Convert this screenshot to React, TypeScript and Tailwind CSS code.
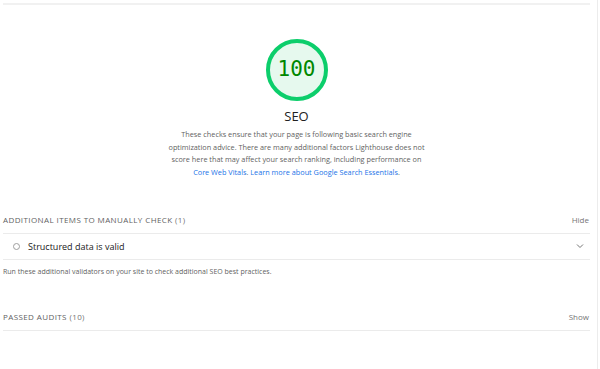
import React from "react";

function Gauge() {
  return (
    <div className="relative h-[64px] w-[64px]">
      <svg width="64" height="64" viewBox="0 0 64 64" className="absolute inset-0">
        <circle cx="32" cy="32" r="29" fill="#e6f9ee" stroke="#0cce6b" strokeWidth="4" />
      </svg>
      <div className="absolute inset-0 flex items-center justify-center text-[21px] text-[#008800] [font-family:'DejaVu_Sans_Mono',monospace]">
        100
      </div>
    </div>
  );
}

function GroupHeader({ title, count, action }: { title: string; count: number; action: string }) {
  return (
    <div className="flex h-[26px] items-center justify-between border-b border-[#ebebeb] pr-[1px]">
      <div className="text-[8px] tracking-[0.05em] text-[#5f5f5f]">
        {title} <span className="text-[#757575]">({count})</span>
      </div>
      <div className="text-[8px] text-[#757575]">{action}</div>
    </div>
  );
}

export default function App() {
  return (
    <div className="flex h-[369px] w-[600px] overflow-hidden bg-white [font-family:'Open_Sans',sans-serif]">
      <div className="flex w-[597px] flex-col pl-[3px] pr-[7px] pt-[3px]">
        <div className="h-[2px] bg-[#f1f1f1]" />

        <div className="flex flex-col items-center pt-[33px]">
          <Gauge />
          <div className="mt-[5px] text-[13px] font-normal leading-[18px] text-[#212121]">SEO</div>
          <p className="mt-[3px] whitespace-nowrap text-center text-[7.3px] leading-[12.7px] text-[#5f5f5f]">
            These checks ensure that your page is following basic search engine
            <br />
            optimization advice. There are many additional factors Lighthouse does not
            <br />
            score here that may affect your search ranking, including performance on
            <br />
            <span className="text-[#1a73e8]">Core Web Vitals</span>.{" "}
            <span className="text-[#1a73e8]">Learn more about Google Search Essentials</span>.
          </p>
        </div>

        <div className="mt-[29px]">
          <GroupHeader title="ADDITIONAL ITEMS TO MANUALLY CHECK" count={1} action="Hide" />
          <div className="flex h-[26px] items-center justify-between border-b border-[#ebebeb] pl-[10px] pr-[6px]">
            <div className="flex items-center gap-[8px]">
              <span className="h-[7px] w-[7px] rounded-full border border-[#9e9e9e]" />
              <span className="text-[9px] text-[#212121]">Structured data is valid</span>
            </div>
            <svg width="8" height="6" viewBox="0 0 8 6">
              <path d="M1 1.5 L4 4.5 L7 1.5" fill="none" stroke="#757575" strokeWidth="1" />
            </svg>
          </div>
          <div className="pt-[6px] text-[7px] leading-[12px] text-[#5f5f5f]">
            Run these additional validators on your site to check additional SEO best practices.
          </div>
        </div>

        <div className="mt-[27px]">
          <GroupHeader title="PASSED AUDITS" count={10} action="Show" />
        </div>
      </div>
      <div className="h-full w-[1px] bg-[#ececec]" />
    </div>
  );
}
